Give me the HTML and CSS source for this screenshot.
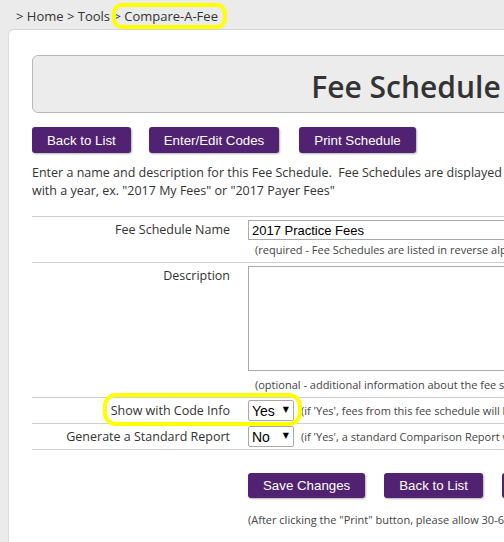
FILE: index.html
```html
<!DOCTYPE html>
<html lang="en">
<head>
    <meta charset="UTF-8">
    <meta name="viewport" content="width=device-width, initial-scale=1.0">
    <title>Fee Schedule</title>
    <link rel="stylesheet" href="styles.css">
</head>
<body>
    <div class="crumbs">
        &gt; Home &gt; Tools &gt; Compare-A-Fee
        <span class="mark mark-crumb"></span>
    </div>
    <div class="panel">
        <div class="title-box">
            <h1>Fee Schedule</h1>
        </div>
        <div class="actions">
            <button>Back to List</button>
            <button class="wide-gap">Enter/Edit Codes</button>
            <button>Print Schedule</button>
        </div>
        <p class="intro">Enter a name and description for this Fee Schedule.&nbsp; Fee Schedules are displayed in reverse alphabetical order, so you may want to begin the name<br>with a year, ex. "2017 My Fees" or "2017 Payer Fees"</p>
        <table class="fields">
            <tr>
                <td class="label">Fee Schedule Name</td>
                <td class="field">
                    <input type="text" class="text-in" value="2017 Practice Fees">
                    <div class="hint">(required - Fee Schedules are listed in reverse alphabetical order)</div>
                </td>
            </tr>
            <tr>
                <td class="label">Description</td>
                <td class="field">
                    <textarea class="text-area"></textarea>
                    <div class="hint hint-low">(optional - additional information about the fee schedule)</div>
                </td>
            </tr>
            <tr class="short">
                <td class="label">Show with Code Info</td>
                <td class="field">
                    <div class="pick-row">
                        <span class="pick"><select><option>Yes</option><option>No</option></select></span>
                        <span class="side-hint">(if 'Yes', fees from this fee schedule will be shown with the code information)</span>
                    </div>
                </td>
            </tr>
            <tr class="short">
                <td class="label">Generate a Standard Report</td>
                <td class="field">
                    <div class="pick-row">
                        <span class="pick"><select><option>No</option><option>Yes</option></select></span>
                        <span class="side-hint">(if 'Yes', a standard Comparison Report will be generated)</span>
                    </div>
                </td>
            </tr>
        </table>
        <div class="actions bottom">
            <button>Save Changes</button>
            <button>Back to List</button>
            <button>Delete</button>
        </div>
        <p class="note">(After clicking the "Print" button, please allow 30-60 seconds for the schedule to be generated)</p>
        <span class="mark mark-row"></span>
    </div>
</body>
</html>
```

FILE: styles.css
```css
html {
    overflow: hidden;
}
body {
    font-family: "Open Sans", sans-serif;
    font-size: 12.5px;
    color: #333;
    background-color: #ebebeb;
    margin: 0;
    padding: 0;
    width: 900px;
}
.crumbs {
    position: relative;
    height: 29px;
    line-height: 32px;
    padding-left: 16px;
    font-size: 13px;
    color: #333;
}
.mark {
    position: absolute;
    border: 4px solid #ffff00;
    border-radius: 10px;
}
.mark-crumb {
    left: 112px;
    top: 3px;
    width: 107px;
    height: 18px;
}
.mark-row {
    left: 94px;
    top: 363px;
    width: 191px;
    height: 25px;
    border-radius: 13px;
}
.panel {
    position: relative;
    margin-left: 8px;
    background-color: #fff;
    border-top: 1px solid #d6d6d6;
    border-left: 1px solid #dcdcdc;
    border-top-left-radius: 6px;
    padding: 25px 0 20px 23px;
}
.title-box {
    width: 746px;
    height: 56px;
    background-color: #ececec;
    border: 1px solid #b8b8b8;
    border-radius: 6px;
    text-align: center;
}
h1 {
    margin: 0;
    font-size: 30px;
    font-weight: 600;
    line-height: 62px;
    color: #333;
}
.actions {
    display: flex;
    gap: 18px;
    margin-top: 14px;
}
.actions .wide-gap {
    margin-right: 2px;
}
button {
    font-family: "Liberation Sans", Arial, sans-serif;
    font-size: 13.3px;
    color: #fff;
    background-color: #512271;
    border: none;
    border-radius: 3px;
    height: 26px;
    padding: 0 15px;
    box-shadow: 1px 1px 2px rgba(0,0,0,0.3);
}
.intro {
    margin: 11px 0 0 0;
    width: 900px;
    line-height: 18px;
}
.fields {
    margin-top: 16px;
    width: 760px;
    border-collapse: collapse;
    border-top: 1px solid #cfcfcf;
}
.fields td {
    border-bottom: 1px solid #cfcfcf;
    vertical-align: top;
    padding: 3px 0 3px 0;
}
.fields .label {
    width: 198px;
    padding-right: 18px;
    padding-top: 4px;
    text-align: right;
    line-height: 18px;
}
.short td.field {
    padding-top: 2px;
    padding-bottom: 2px;
}
.text-in {
    display: block;
    box-sizing: border-box;
    width: 500px;
    height: 20px;
    margin: 0;
    padding: 0 3px;
    border: 1px solid #a9a9a9;
    font-family: "Liberation Sans", Arial, sans-serif;
    font-size: 13px;
    color: #000;
}
.text-area {
    display: block;
    box-sizing: border-box;
    width: 500px;
    height: 105px;
    margin: 0;
    border: 1px solid #a9a9a9;
    resize: none;
}
.hint {
    font-size: 11px;
    color: #444;
    padding-left: 7px;
    line-height: 18px;
    margin-top: 1px;
    white-space: nowrap;
}
.hint-low {
    margin-top: 5px;
}
.pick-row {
    display: flex;
    align-items: center;
    gap: 7px;
}
.pick {
    position: relative;
    display: block;
}
.pick select {
    display: block;
    appearance: none;
    -webkit-appearance: none;
    box-sizing: border-box;
    width: 46px;
    height: 21px;
    margin: 0;
    padding: 0 0 0 3px;
    border: 1px solid #a9a9a9;
    border-radius: 2px;
    background-color: #fff;
    font-family: "Liberation Sans", Arial, sans-serif;
    font-size: 14px;
    color: #000;
}
.pick::after {
    content: "\25BC";
    position: absolute;
    right: 5px;
    top: 5px;
    font-family: "DejaVu Sans", sans-serif;
    font-size: 8px;
    color: #000;
    pointer-events: none;
}
.side-hint {
    font-size: 11px;
    color: #444;
    white-space: nowrap;
}
.bottom {
    margin-top: 23px;
    margin-left: 216px;
    gap: 19px;
}
.bottom button {
    height: 25px;
}
.note {
    margin: 14px 0 0 216px;
    font-size: 11px;
    color: #444;
    white-space: nowrap;
}
```
